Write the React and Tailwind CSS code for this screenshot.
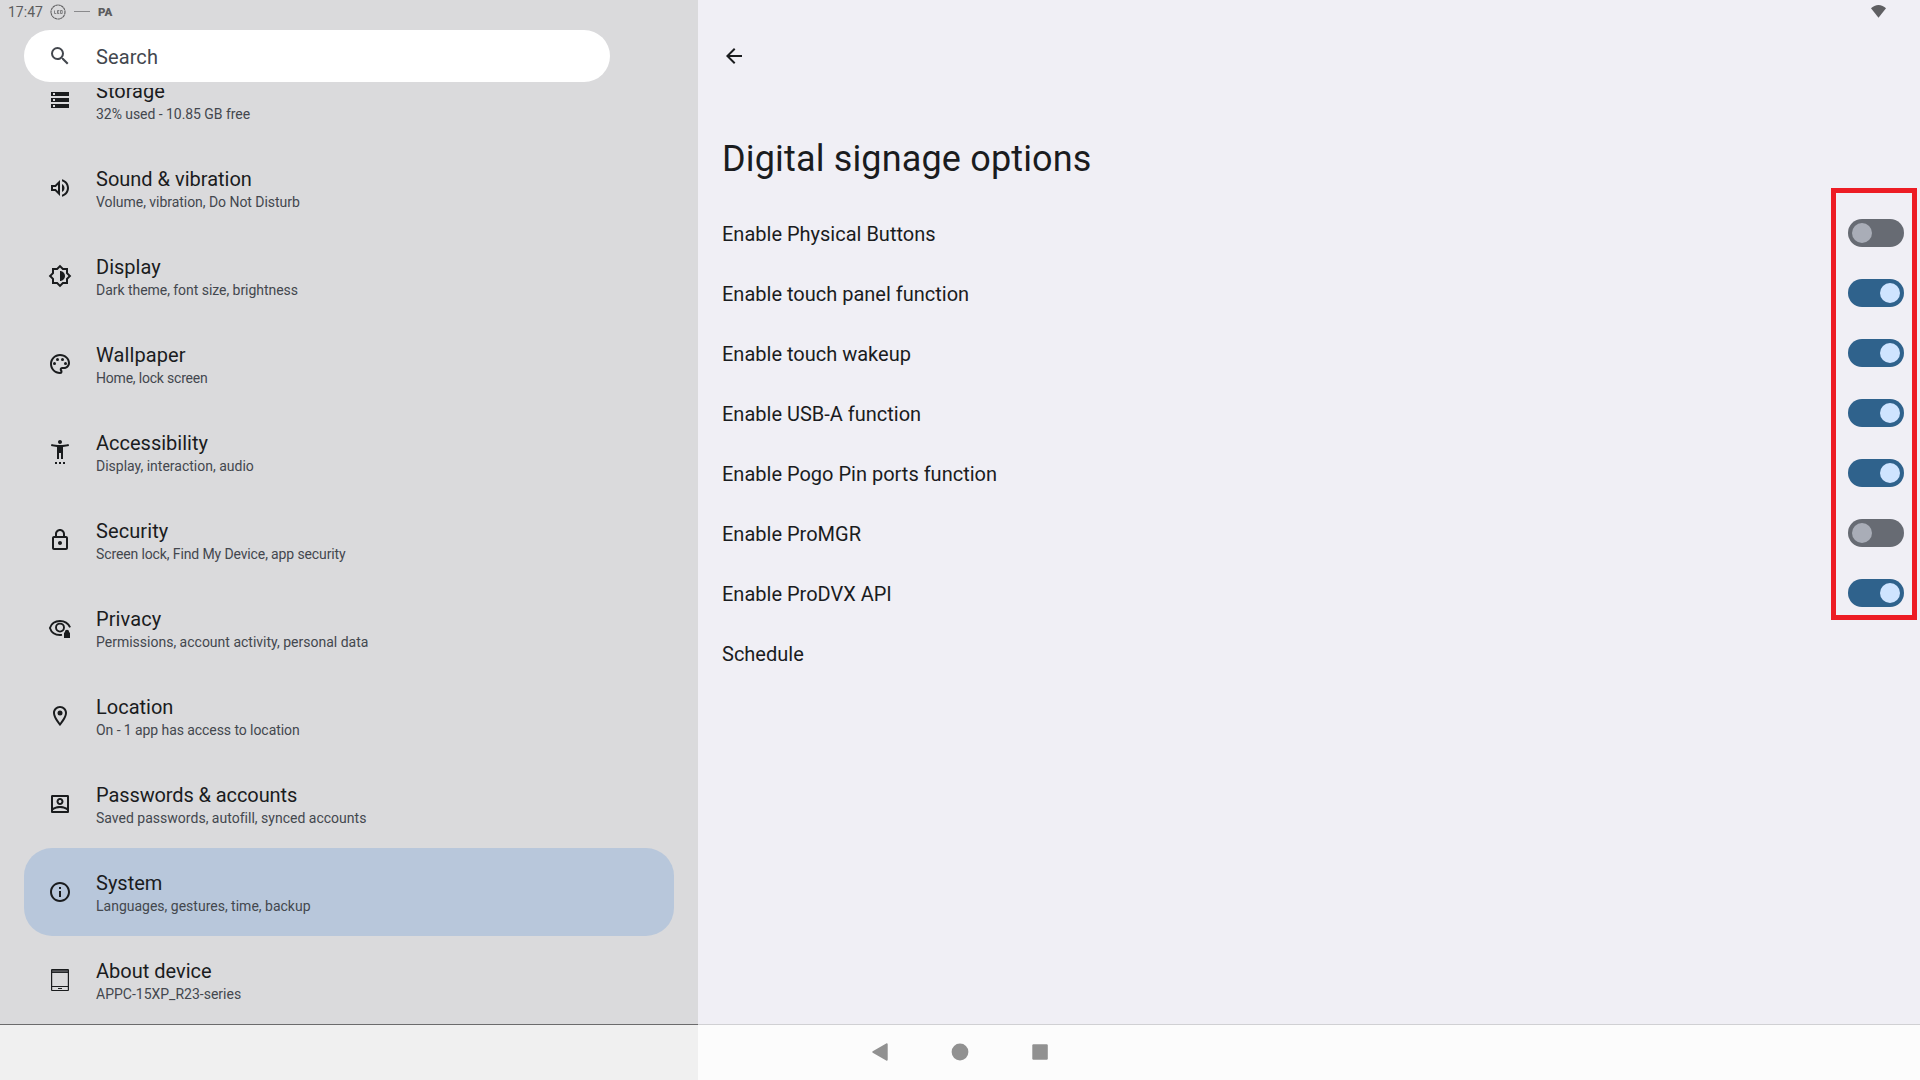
const ICONS = {
  storage: (
    <path fillRule="evenodd" d="M3 4h18v4H3zM5 5v2h2V5zM3 10h18v4H3zM5 11v2h2v-2zM3 16h18v4H3zM5 17v2h2v-2z" />
  ),
  sound: (
    <path d="M3 9v6h4l5 5V4L7 9H3zm7-.17v6.34L7.83 13H5v-2h2.83L10 8.83zM16.5 12c0-1.77-1.02-3.29-2.5-4.03v8.05c1.48-.73 2.5-2.25 2.5-4.02zM14 3.23v2.06c2.89.86 5 3.54 5 6.71s-2.11 5.85-5 6.71v2.06c4.01-.91 7-4.49 7-8.77 0-4.28-2.99-7.86-7-8.77z" />
  ),
  display: (
    <path d="M20 15.31L23.31 12 20 8.69V4h-4.69L12 .69 8.69 4H4v4.69L.69 12 4 15.31V20h4.69L12 23.31 15.31 20H20v-4.69zm-2-.83V18h-3.52L12 20.48 9.52 18H6v-3.52L3.52 12 6 9.52V6h3.52L12 3.52 14.48 6H18v3.52L20.48 12 18 14.48zM12 7v10c2.76 0 5-2.24 5-5s-2.24-5-5-5z" />
  ),
  wallpaper: (
    <g>
      <path d="M12 22C6.49 22 2 17.51 2 12S6.49 2 12 2s10 4.04 10 9c0 3.31-2.69 6-6 6h-1.77c-.28 0-.5.22-.5.5 0 .12.05.23.13.33.41.47.64 1.06.64 1.67A2.5 2.5 0 0 1 12 22zm0-18c-4.41 0-8 3.59-8 8s3.59 8 8 8c.28 0 .5-.22.5-.5a.54.54 0 0 0-.14-.35c-.41-.46-.63-1.05-.63-1.65a2.5 2.5 0 0 1 2.5-2.5H16c2.21 0 4-1.79 4-4 0-3.86-3.59-7-8-7z" />
      <circle cx="6.5" cy="11.5" r="1.5" />
      <circle cx="9.5" cy="7.5" r="1.5" />
      <circle cx="14.5" cy="7.5" r="1.5" />
      <circle cx="17.5" cy="11.5" r="1.5" />
    </g>
  ),
  accessibility: (
    <path d="M20.5 4c-2.61.7-5.67 1-8.5 1S6.11 4.7 3.5 4L3 6c1.86.5 4 .83 6 1v12h2v-6h2v6h2V7c2-.17 4.14-.5 6-1l-.5-2zM12 4c1.1 0 2-.9 2-2s-.9-2-2-2-2 .9-2 2 .9 2 2 2zM7 24h2v-2H7v2zM11 24h2v-2h-2v2zM15 24h2v-2h-2v2z" />
  ),
  security: (
    <path d="M12 17c1.1 0 2-.9 2-2s-.9-2-2-2-2 .9-2 2 .9 2 2 2zm6-9h-1V6c0-2.76-2.24-5-5-5S7 3.24 7 6v2H6c-1.1 0-2 .9-2 2v10c0 1.1.9 2 2 2h12c1.1 0 2-.9 2-2V10c0-1.1-.9-2-2-2zM9 6c0-1.66 1.34-3 3-3s3 1.34 3 3v2H9V6zm9 14H6V10h12v10z" />
  ),
  privacy: (
    <g>
      <path d="M14 18.9c-.65.1-1.3.15-2 .15C7.1 19.05 3.3 16.2 1.9 12 3.3 7.8 7.1 4.95 12 4.95c4.6 0 8.3 2.6 10.1 6.35" fill="none" stroke="currentColor" strokeWidth="1.9" />
      <circle cx="12" cy="11.6" r="4" fill="none" stroke="currentColor" strokeWidth="1.9" />
      <path d="M16 22v-5.6h.9v-.6a2.1 2.1 0 0 1 4.2 0v.6h.9V22z" />
    </g>
  ),
  location: (
    <g>
      <path d="M12 2C8.13 2 5 5.13 5 9c0 5.25 7 13 7 13s7-7.75 7-13c0-3.87-3.13-7-7-7zM7 9c0-2.76 2.24-5 5-5s5 2.24 5 5c0 2.88-2.88 7.19-5 9.88C9.92 16.21 7 11.85 7 9z" />
      <circle cx="12" cy="9" r="2.5" />
    </g>
  ),
  accounts: (
    <path d="M19.7 3H4.3C3.6 3 3 3.6 3 4.3v15.4C3 20.4 3.6 21 4.3 21h15.4c.7 0 1.3-.6 1.3-1.3V4.3C21 3.6 20.4 3 19.7 3zM19 5v10.79C16.52 14.37 13.23 14 12 14s-4.52.37-7 1.79V5h14zM5 19v-.77C6.74 16.66 10.32 16 12 16s5.26.66 7 2.23V19H5zM12 13c1.94 0 3.5-1.56 3.5-3.5S13.94 6 12 6 8.5 7.56 8.5 9.5 10.06 13 12 13zm0-5c.83 0 1.5.67 1.5 1.5S12.83 11 12 11s-1.5-.67-1.5-1.5S11.17 8 12 8z" />
  ),
  system: (
    <path d="M11 7h2v2h-2zm0 4h2v6h-2zm1-9C6.48 2 2 6.48 2 12s4.48 10 10 10 10-4.48 10-10S17.52 2 12 2zm0 18c-4.41 0-8-3.59-8-8s3.59-8 8-8 8 3.59 8 8-3.59 8-8 8z" />
  ),
  about: (
    <g>
      <path fillRule="evenodd" d="M4 1h16a1 1 0 0 1 1 1v20a1 1 0 0 1-1 1H4a1 1 0 0 1-1-1V2a1 1 0 0 1 1-1zM4.2 5v13h15.6V5zM4.2 19v3h15.600v-3z" />
      <path d="M4.200 2.200h15.600v2H4.200z" fill="#56575a" />
      <path d="M10 20h4v1h-4z" />
    </g>
  ),
};

const MENU = [
  { icon: 'storage', title: 'Storage', subtitle: '32% used - 10.85 GB free', fit: 'tracking-[-0.05px]' },
  { icon: 'sound', title: 'Sound & vibration', subtitle: 'Volume, vibration, Do Not Disturb', fit: 'tracking-[-0.04px]' },
  { icon: 'display', title: 'Display', subtitle: 'Dark theme, font size, brightness', fit: 'tracking-[-0.04px]' },
  { icon: 'wallpaper', title: 'Wallpaper', titleFit: 'tracking-[0.1px]', subtitle: 'Home, lock screen', fit: 'tracking-[-0.2px]' },
  { icon: 'accessibility', title: 'Accessibility', subtitle: 'Display, interaction, audio' },
  { icon: 'security', title: 'Security', titleFit: 'tracking-[0.1px]', subtitle: 'Screen lock, Find My Device, app security', fit: 'tracking-[-0.12px]' },
  { icon: 'privacy', title: 'Privacy', titleFit: 'tracking-[0.1px]', subtitle: 'Permissions, account activity, personal data' },
  { icon: 'location', title: 'Location', subtitle: 'On - 1 app has access to location', fit: 'tracking-[-0.07px]' },
  { icon: 'accounts', title: 'Passwords & accounts', titleFit: 'tracking-[-0.1px]', subtitle: 'Saved passwords, autofill, synced accounts', fit: 'tracking-[0.01px]' },
  { icon: 'system', title: 'System', subtitle: 'Languages, gestures, time, backup' },
  { icon: 'about', title: 'About device', subtitle: 'APPC-15XP_R23-series' },
];

const OPTIONS = [
  ['Enable Physical Buttons', false],
  ['Enable touch panel function', true],
  ['Enable touch wakeup', true],
  ['Enable USB-A function', true],
  ['Enable Pogo Pin ports function', true],
  ['Enable ProMGR', false],
  ['Enable ProDVX API', true],
];

function Icon({ children, className = '' }) {
  return (
    <svg viewBox="0 0 24 24" fill="currentColor" className={`size-6 shrink-0 ${className}`}>
      {children}
    </svg>
  );
}

function MenuRow({ icon, title, subtitle, titleFit = '', fit = '', active }) {
  return (
    <li className={`flex h-[88px] shrink-0 items-center rounded-[28px] pl-6 ${active ? 'bg-[#b8c7db]' : ''}`}>
      <Icon>{ICONS[icon]}</Icon>
      <div className="ml-6 pt-1 whitespace-nowrap">
        <div className={`text-[20px] leading-6 ${titleFit}`}>{title}</div>
        <div className={`text-[14px] leading-[22px] text-[#43474e] ${fit}`}>{subtitle}</div>
      </div>
    </li>
  );
}

function Toggle({ on }) {
  return (
    <span className={`flex h-7 w-14 items-center rounded-full px-1 ${on ? 'justify-end bg-[#2f628c]' : 'justify-start bg-[#676b73]'}`}>
      <span className={`size-5 rounded-full ${on ? 'bg-[#cfe4ff]' : 'bg-[#a9adb7]'}`} />
    </span>
  );
}

function Sidebar() {
  return (
    <aside className="flex w-[698px] shrink-0 flex-col bg-[#dadadc]">
      <div className="flex h-[30px] items-start pl-2 pt-[3px] text-[#5c5c5e]">
        <span className="w-[42px] text-[14px] leading-[18px]">17:47</span>
        <svg viewBox="0 0 16 16" className="mt-[1px] size-4" fill="none" stroke="currentColor">
          <circle cx="8" cy="8" r="7" strokeWidth="1.1" strokeDasharray="2.6 0.4" />
          <path d="M4.500 6.500v3h1.800M9.300 6.500H7.500v3h1.800M7.500 8h1.500M10.500 6.500h1.700v3h-1.700z" strokeWidth=".7" />
        </svg>
        <span className="ml-2 mt-2 h-px w-4 bg-[#8a8a8c]" />
        <span className="ml-2 text-[11.5px] font-black leading-[19px]">PA</span>
      </div>
      <div className="ml-6 flex h-[52px] w-[586px] shrink-0 items-center rounded-full bg-white pl-6 text-[#43474e]">
        <Icon>
          <path d="M15.500 14h-.79l-.28-.27A6.471 6.471 0 0 0 16 9.500 6.500 6.500 0 1 0 9.500 16c1.610 0 3.090-.59 4.230-1.570l.27.28v.79l5 4.990L20.490 19l-4.990-5zm-6 0C7.010 14 5 11.990 5 9.500S7.010 5 9.500 5 14 7.010 14 9.500 11.990 14 9.500 14z" />
        </Icon>
        <span className="ml-6 mt-[2px] text-[20px] tracking-[0.1px]">Search</span>
      </div>
      <div className="mt-1.5 flex h-[936px] flex-col justify-end overflow-hidden px-6">
        <ul className="flex flex-col">
          {MENU.map((item) => (
            <MenuRow key={item.icon} {...item} active={item.icon === 'system'} />
          ))}
        </ul>
      </div>
    </aside>
  );
}

function Detail() {
  return (
    <main className="flex grow flex-col bg-[#f0eff5]">
      <div className="flex h-[30px] justify-end pr-[34px] pt-[5px] text-[#5f5f62]">
        <svg viewBox="0 0 15 13" className="h-[13px] w-[15px]" fill="currentColor">
          <path d="M7.500 12.700L0 3.300C2 1.300 4.700 0 7.500 0S13 1.300 15 3.300z" />
        </svg>
      </div>
      <div className="flex h-[52px] items-center pl-6">
        <Icon>
          <path d="M20 11H7.830l5.590-5.590L12 4l-8 8 8 8 1.410-1.410L7.830 13H20v-2z" />
        </Icon>
      </div>
      <h1 className="mt-[54px] pl-6 text-[36px] leading-[46px] tracking-[0.16px]">Digital signage options</h1>
      <div className="mt-[21px] flex">
        <ul className="grow pl-6">
          {[...OPTIONS.map(([label]) => label), 'Schedule'].map((label) => (
            <li key={label} className="flex h-[60px] items-center pt-[2px] text-[20px]">{label}</li>
          ))}
        </ul>
        <div className="-mt-[15px] mr-[3px] flex h-[432px] w-[86px] flex-col border-[5px] border-[#ed1c24] pl-3 pt-[10px]">
          {OPTIONS.map(([label, on]) => (
            <div key={label} className="flex h-[60px] shrink-0 items-center">
              <Toggle on={on} />
            </div>
          ))}
        </div>
      </div>
    </main>
  );
}

function NavBar() {
  return (
    <nav className="flex h-14 shrink-0">
      <div className="w-[698px] border-t border-[#6b6b6c] bg-[#f0f0f0]" />
      <div className="flex grow items-center gap-14 border-t border-[#d0d0d3] bg-[#fcfcfc] pb-[1px] pl-[170px] text-[#919191]">
        <Icon>
          <path d="M19.700 4.200v15.600c0 .8-.8 1.100-1.500.7L4.700 12.800a1 1 0 0 1 0-1.600l13.500-7.700c.7-.4 1.500-.1 1.500.7z" />
        </Icon>
        <Icon>
          <circle cx="12" cy="12" r="8.400" />
        </Icon>
        <Icon>
          <rect x="4.300" y="4.200" width="15.500" height="15.500" rx="1.200" />
        </Icon>
      </div>
    </nav>
  );
}

export default function App() {
  return (
    <div className="flex h-[1080px] w-[1920px] flex-col overflow-hidden font-['Roboto',sans-serif] text-[#1a1c1e]">
      <div className="flex h-[1024px]">
        <Sidebar />
        <Detail />
      </div>
      <NavBar />
    </div>
  );
}
